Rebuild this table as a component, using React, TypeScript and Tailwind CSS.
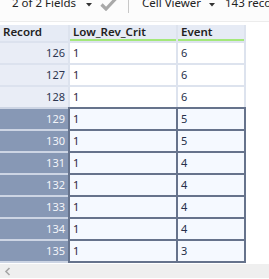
import React from "react";

const rows = [126, 127, 128, 129, 130, 131, 132, 133, 134, 135];
const events: Record<number, number> = { 126: 6, 127: 6, 128: 6, 129: 5, 130: 5, 131: 4, 132: 4, 133: 4, 134: 4, 135: 3 };

function Caret() {
  return (
    <svg width="6" height="4" viewBox="0 0 6 4" className="block">
      <path d="M0 0 L6 0 L3 3.5 Z" fill="#333" />
    </svg>
  );
}

export default function App() {
  return (
    <div
      className="w-[269px] h-[279px] overflow-hidden bg-white text-[#222]"
      style={{ fontFamily: '"Segoe UI", "Noto Sans", sans-serif' }}
    >
      {/* toolbar */}
      <div className="h-[22px] bg-[#fcfcfc] border-b border-[#ececec] overflow-hidden">
        <div className="flex items-start pl-[12px] -mt-[4px] text-[11.5px] leading-[14px] whitespace-nowrap">
          <span className="shrink-0 w-[74px]">2 of 2 Fields</span>
          <span className="shrink-0 w-[8px] pt-[7px]"><Caret /></span>
          <span className="shrink-0 ml-[6px] pt-[1px]">
            <svg width="17" height="14" viewBox="0 0 17 14">
              <path d="M1.5 7.5 L6 12 L15.5 2" stroke="#a9a9a9" strokeWidth="3.2" fill="none" />
            </svg>
          </span>
          <span className="shrink-0 ml-[11px] mt-[4px] w-px h-[13px] bg-[#c8c8c8]" />
          <span className="shrink-0 ml-[13px] w-[67px]">Cell Viewer</span>
          <span className="shrink-0 w-[6px] pt-[7px]"><Caret /></span>
          <span className="shrink-0 ml-[10px]">143 records</span>
        </div>
      </div>
      <div className="h-[3px] bg-white" />

      {/* header */}
      <div className="flex h-[16px] text-[11.5px] font-semibold leading-[14px]">
        <div className="w-[68px] bg-[#e6ebf5] pl-[3px]">Record</div>
        <div className="w-[2px] bg-[#dde3ee]" />
        <div className="w-[106px] bg-[#e6ebf5] border-b-2 border-[#a4e87a] pl-[3px]">Low_Rev_Crit</div>
        <div className="w-[2px] bg-[#dde3ee]" />
        <div className="w-[66px] bg-[#e6ebf5] border-b-2 border-[#a4e87a] pl-[3px]">Event</div>
        <div className="w-[2px] bg-[#dde3ee]" />
      </div>

      {/* rows */}
      {rows.map((n) => {
        const sel = n >= 129;
        return (
          <div key={n} className="flex h-[22px] text-[11px] leading-[20px]">
            <div
              className={
                sel
                  ? "w-[68px] border-t-2 border-[#cdd5e4] bg-[#8798b5] text-[#f3f5f9] text-right pr-[3px]"
                  : "w-[68px] border-t-2 border-[#dce2ee] bg-[#e9edf6] text-[#2c3550] text-right pr-[3px]"
              }
            >
              {n}
            </div>
            <div
              className={
                sel
                  ? "w-[108px] border-t-2 border-l-2 border-[#66738c] bg-[#f5f9ff] text-[#2d2640] pl-[3px]"
                  : "w-[108px] border-t-2 border-l-2 border-[#dde3ee] bg-white text-[#2d2640] pl-[3px]"
              }
            >
              1
            </div>
            <div
              className={
                sel
                  ? "w-[70px] border-t-2 border-x-2 border-[#66738c] bg-[#f5f9ff] text-[#26304a] pl-[3px]"
                  : "w-[70px] border-t-2 border-x-2 border-[#dde3ee] bg-white text-[#26304a] pl-[3px]"
              }
            >
              {events[n]}
            </div>
          </div>
        );
      })}
      <div className="flex h-[2px]">
        <div className="w-[68px] bg-[#cdd5e4]" />
        <div className="w-[178px] bg-[#66738c]" />
      </div>
      <div className="h-px bg-white" />

      {/* horizontal scrollbar */}
      <div className="h-[14px] bg-[#efefef] flex items-center pl-[4px]">
        <svg width="7" height="9" viewBox="0 0 7 9">
          <path d="M5.5 1 L2 4.5 L5.5 8" stroke="#a6a6a6" strokeWidth="1.6" fill="none" />
        </svg>
      </div>
    </div>
  );
}
